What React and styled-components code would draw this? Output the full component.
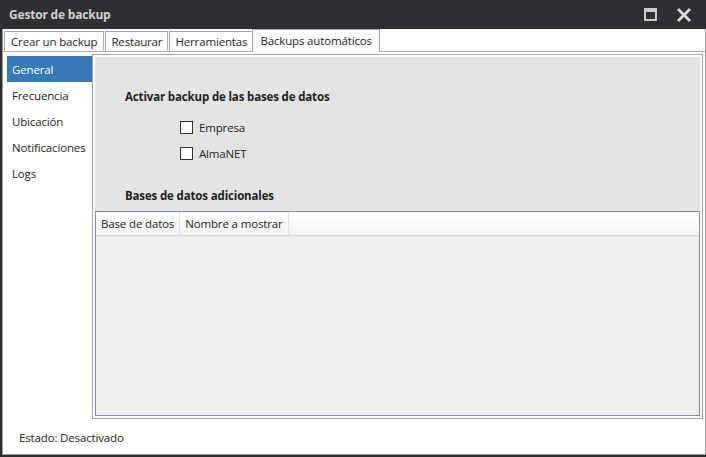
import React from 'react';
import styled, { createGlobalStyle } from 'styled-components';

const GlobalStyle = createGlobalStyle`
  html, body {
    margin: 0;
    padding: 0;
    background: #2d2f32;
  }
  * {
    box-sizing: border-box;
  }
`;

const Window = styled.div`
  width: 706px;
  height: 457px;
  display: flex;
  flex-direction: column;
  background: #2d2f32;
  padding: 0 0 2px 2px;
  font-family: 'Segoe UI', 'Open Sans', 'Noto Sans', sans-serif;
  font-size: 11.5px;
  letter-spacing: -0.15px;
  color: #1e1e1e;
`;

const TitleBar = styled.div`
  height: 29px;
  display: flex;
  align-items: center;
  padding: 0 10px 0 7px;
`;

const Title = styled.div`
  flex: 1;
  color: #d2d2d2;
  font-weight: 700;
  font-size: 12px;
  letter-spacing: -0.2px;
`;

const TitleButton = styled.button`
  width: 24px;
  height: 22px;
  margin-left: 10px;
  padding: 0;
  border: none;
  background: transparent;
  display: flex;
  align-items: center;
  justify-content: center;
`;

const Body = styled.div`
  flex: 1;
  display: flex;
  flex-direction: column;
  background: #fff;
  border: 1px solid #9c9c9c;
  border-top: none;
`;

const TabStrip = styled.div`
  height: 23px;
  display: flex;
  align-items: flex-end;
  padding-left: 1px;
  border-bottom: 1px solid #acacac;
`;

const Tab = styled.div`
  height: ${(p) => (p.$active ? '23px' : '20px')};
  margin-bottom: ${(p) => (p.$active ? '-1px' : '0')};
  margin-left: ${(p) => (p.$first ? '0' : p.$active ? '-1px' : '1px')};
  padding: ${(p) => (p.$active ? '3px 7px 0' : p.$first ? '2px 6px 0' : '2px 5px 0')};
  border: 1px solid #acacac;
  border-bottom: ${(p) => (p.$active ? 'none' : '1px solid transparent')};
  background: #fff;
  white-space: nowrap;
  line-height: 16px;
  position: relative;
  z-index: ${(p) => (p.$active ? 1 : 0)};
`;

const Content = styled.div`
  flex: 1;
  display: flex;
  min-height: 0;
`;

const Nav = styled.div`
  width: 89px;
  padding: 4px 0 0 4px;
  display: flex;
  flex-direction: column;
`;

const NavItem = styled.div`
  height: 26px;
  line-height: 27px;
  padding-left: 5px;
  background: ${(p) => (p.$active ? '#3579b7' : 'transparent')};
  color: ${(p) => (p.$active ? '#fff' : '#1e1e1e')};
  white-space: nowrap;
`;

const MainPanel = styled.div`
  width: 611px;
  margin: 2px 2px 0 0;
  border: 1px solid #a4a4a4;
  padding: 2px;
  background: #fff;
  display: flex;
`;

const Inner = styled.div`
  flex: 1;
  display: flex;
  flex-direction: column;
  background: #e4e4e4;
`;

const Section = styled.div`
  padding-left: 30px;
`;

const Heading = styled.div`
  font-weight: 700;
  line-height: 16px;
  margin-top: ${(p) => p.$top}px;
`;

const CheckList = styled.div`
  margin: 9px 0 0 55px;
  display: flex;
  flex-direction: column;
`;

const CheckRow = styled.label`
  height: 26px;
  display: flex;
  align-items: center;
  gap: 6px;
`;

const Box = styled.span`
  width: 13px;
  height: 13px;
  border: 1px solid #333;
  background: #fff;
`;

const Grid = styled.div`
  flex: 1;
  margin-top: 7px;
  border: 1px solid #6f8fb3;
  background: #efefef;
  display: flex;
  flex-direction: column;
`;

const GridHeader = styled.div`
  height: 24px;
  display: flex;
  background: linear-gradient(#ffffff, #f2f3f6);
  border-bottom: 1px solid #d5d5d5;
`;

const HeaderCell = styled.div`
  padding: 0 5px;
  line-height: 24px;
  border-right: 1px solid #e2e3ea;
  white-space: nowrap;
`;

const Status = styled.div`
  height: 35px;
  padding: 1px 0 0 16px;
  display: flex;
  align-items: center;
`;

const tabs = ['Crear un backup', 'Restaurar', 'Herramientas', 'Backups automáticos'];
const navItems = ['General', 'Frecuencia', 'Ubicación', 'Notificaciones', 'Logs'];

export default function App() {
  return (
    <>
      <GlobalStyle />
      <Window>
        <TitleBar>
          <Title>Gestor de backup</Title>
          <TitleButton aria-label="Maximizar">
            <svg width="13" height="13" viewBox="0 0 13 13">
              <rect x="1" y="1" width="11" height="11" fill="none" stroke="#c9c9c9" strokeWidth="2" />
              <rect x="1" y="1" width="11" height="3" fill="#c9c9c9" />
            </svg>
          </TitleButton>
          <TitleButton aria-label="Cerrar">
            <svg width="14" height="14" viewBox="0 0 14 14">
              <path d="M2 2 L12 12 M12 2 L2 12" stroke="#dcdcdc" strokeWidth="2.8" strokeLinecap="square" />
            </svg>
          </TitleButton>
        </TitleBar>
        <Body>
          <TabStrip>
            {tabs.map((t, i) => (
              <Tab key={t} $first={i === 0} $active={i === 3}>
                {t}
              </Tab>
            ))}
          </TabStrip>
          <Content>
            <Nav>
              {navItems.map((n, i) => (
                <NavItem key={n} $active={i === 0}>
                  {n}
                </NavItem>
              ))}
            </Nav>
            <MainPanel>
              <Inner>
                <Section>
                  <Heading $top={32}>Activar backup de las bases de datos</Heading>
                  <CheckList>
                    <CheckRow>
                      <Box />
                      Empresa
                    </CheckRow>
                    <CheckRow>
                      <Box />
                      AlmaNET
                    </CheckRow>
                  </CheckList>
                  <Heading $top={22}>Bases de datos adicionales</Heading>
                </Section>
                <Grid>
                  <GridHeader>
                    <HeaderCell>Base de datos</HeaderCell>
                    <HeaderCell>Nombre a mostrar</HeaderCell>
                  </GridHeader>
                </Grid>
              </Inner>
            </MainPanel>
          </Content>
          <Status>Estado: Desactivado</Status>
        </Body>
      </Window>
    </>
  );
}
